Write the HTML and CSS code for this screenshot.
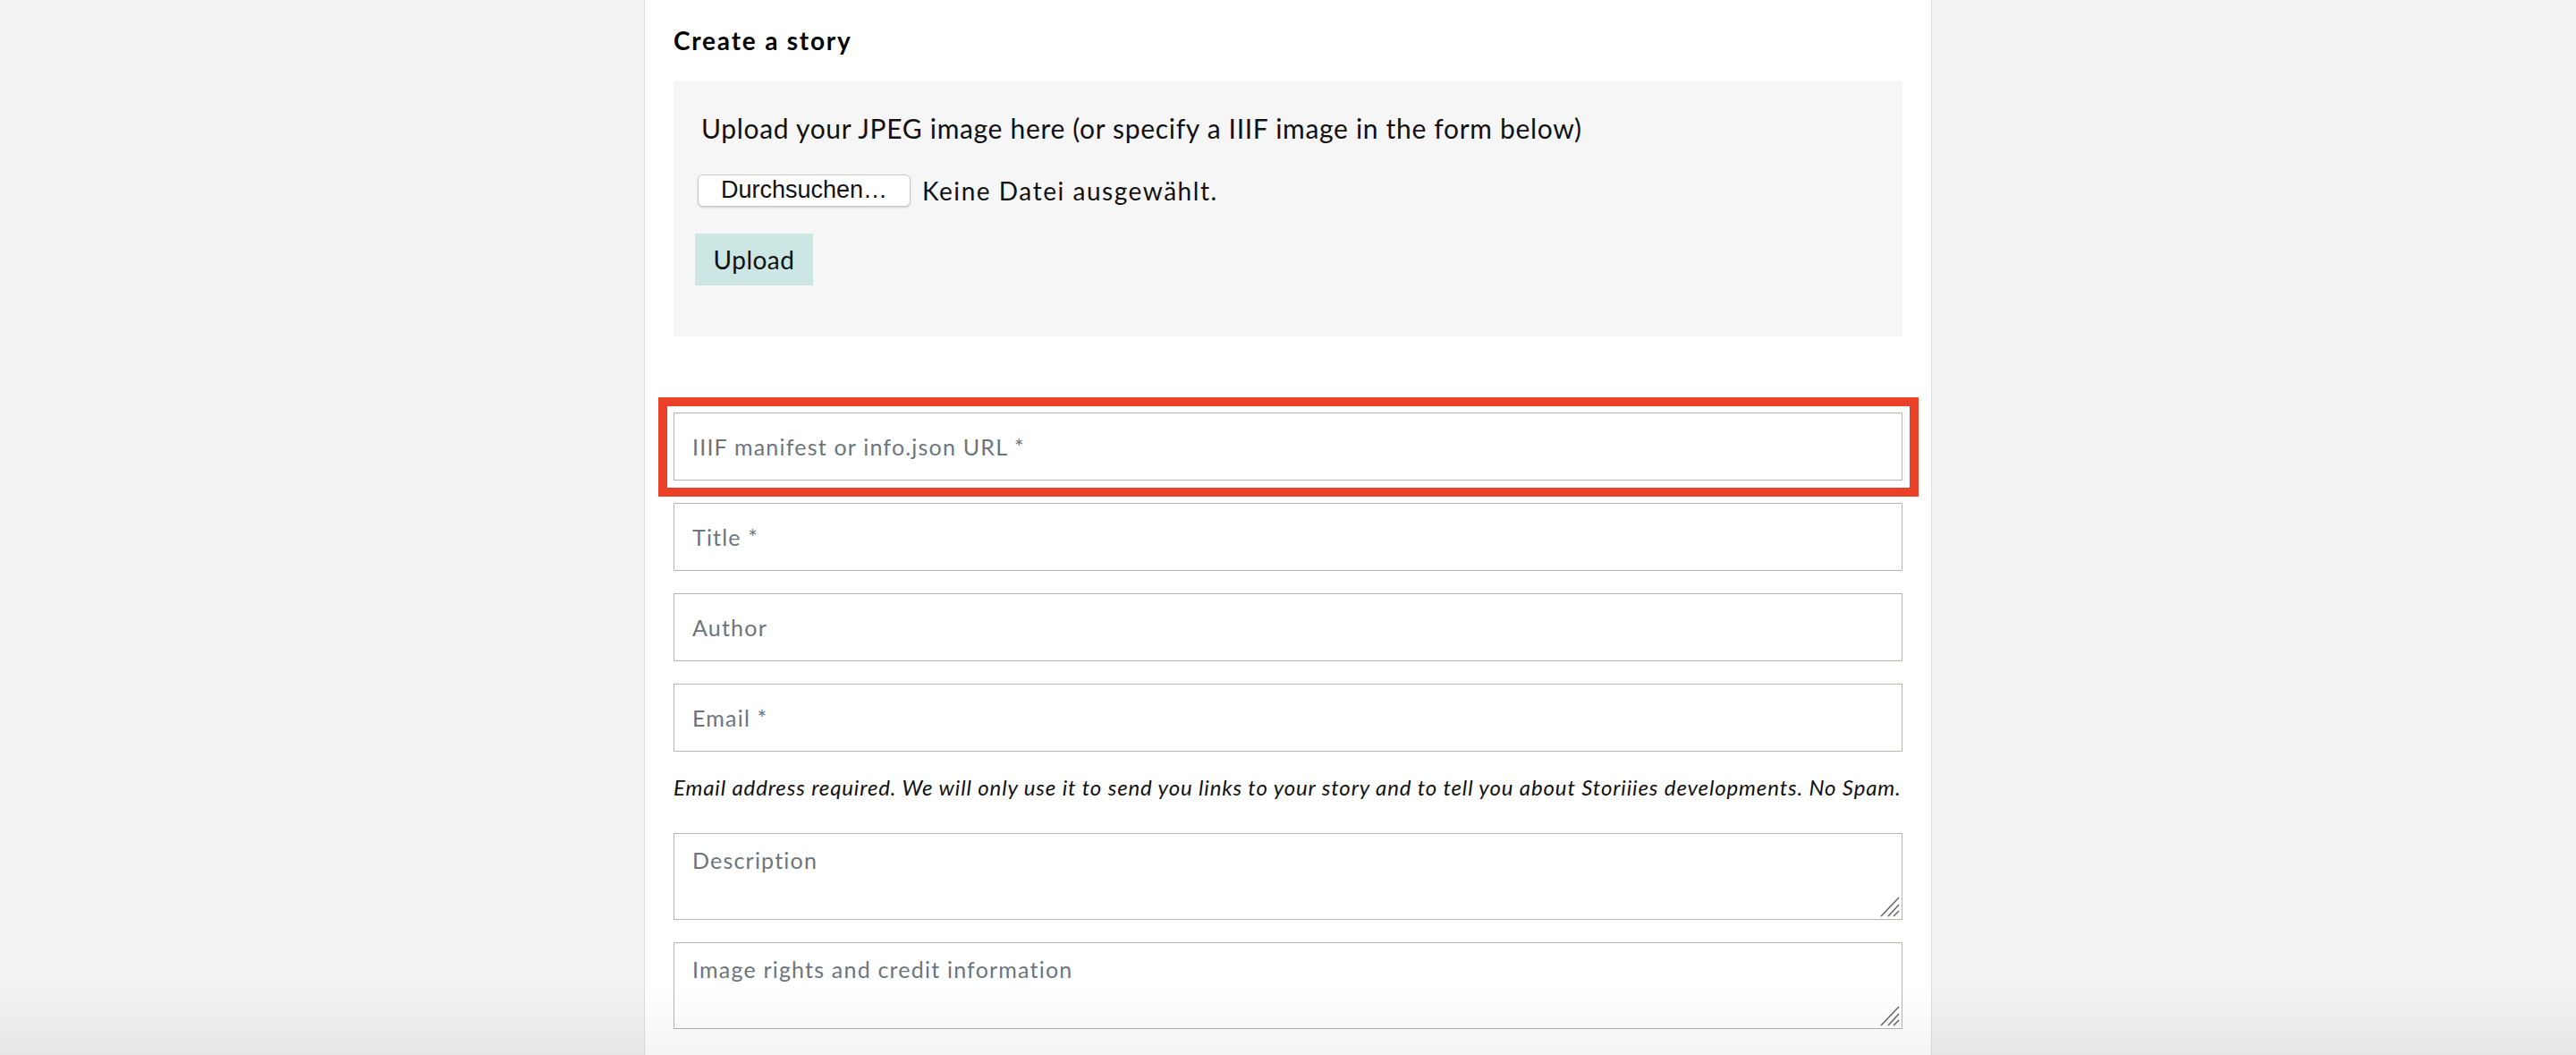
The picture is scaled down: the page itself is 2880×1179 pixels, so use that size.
FILE: index.html
```html
<!DOCTYPE html>
<html lang="en">
<head>
<meta charset="utf-8">
<title>Create a story</title>
<link rel="stylesheet" href="styles.css">
</head>
<body>
<main class="panel">
  <h2 class="title">Create a story</h2>
  <section class="upload-box">
    <p class="upload-hint">Upload your JPEG image here (or specify a IIIF image in the form below)</p>
    <div class="file-row">
      <span class="file-btn">Durchsuchen…</span>
      <span class="file-name">Keine Datei ausgewählt.</span>
    </div>
    <button class="upload-btn" type="button">Upload</button>
  </section>
  <form class="story-form">
    <div class="highlight">
      <input class="field" type="text" placeholder="IIIF manifest or info.json URL *">
    </div>
    <input class="field" type="text" placeholder="Title *">
    <input class="field" type="text" placeholder="Author">
    <input class="field" type="text" placeholder="Email *">
    <p class="note">Email address required. We will only use it to send you links to your story and to tell you about Storiiies developments. No Spam.</p>
    <div class="area-wrap">
      <textarea class="area" placeholder="Description"></textarea>
      <svg class="grip" width="26" height="26" viewBox="0 0 26 26"><path d="M25 4 L5 25 M25 12 L13 25 M25 19 L19 25" stroke="#6a6a6a" stroke-width="1.6" fill="none"/></svg>
    </div>
    <div class="area-wrap">
      <textarea class="area" placeholder="Image rights and credit information"></textarea>
      <svg class="grip" width="26" height="26" viewBox="0 0 26 26"><path d="M25 4 L5 25 M25 12 L13 25 M25 19 L19 25" stroke="#6a6a6a" stroke-width="1.6" fill="none"/></svg>
    </div>
  </form>
</main>
<div class="bottom-shade"></div>
</body>
</html>
```

FILE: styles.css
```css
* { box-sizing: border-box; }

html, body {
  margin: 0;
  padding: 0;
  background: #f2f2f2;
  font-family: Lato, "Open Sans", sans-serif;
  color: #111;
}

.panel {
  width: 1440px;
  min-height: 1179px;
  margin: 0 auto;
  background: #fff;
  border-left: 1px solid #dedede;
  border-right: 1px solid #dedede;
  padding: 29px 32px 40px;
}

.title {
  margin: 0 0 28px;
  font-size: 28px;
  line-height: 1.2;
  font-weight: 700;
  letter-spacing: 1.8px;
  color: #000;
}

.upload-box {
  background: #f6f6f6;
  padding: 34px 31px 57px;
}

.upload-hint {
  margin: 0;
  font-size: 30px;
  line-height: 36px;
  letter-spacing: 0.68px;
  color: #111;
}

.file-row {
  display: flex;
  align-items: center;
  gap: 13px;
  margin-top: 34px;
  margin-left: -4px;
}

.file-btn {
  display: inline-flex;
  align-items: center;
  justify-content: center;
  width: 238px;
  height: 36px;
  background: #fff;
  border: 1px solid #c8c8c8;
  border-radius: 6px;
  box-shadow: 0 1px 2px rgba(0,0,0,0.18);
  font-family: "Liberation Sans", Arial, sans-serif;
  font-size: 27px;
  color: #111;
}

.file-name {
  font-size: 28px;
  letter-spacing: 1.55px;
  color: #111;
}

.upload-btn {
  display: block;
  margin: 30px 0 0 -7px;
  width: 132px;
  height: 58px;
  border: 0;
  padding: 0;
  background: #cce6e4;
  font-family: Lato, sans-serif;
  font-size: 28px;
  letter-spacing: 0.5px;
  color: #111;
}

.story-form {
  margin-top: 85px;
  display: flex;
  flex-direction: column;
}

.highlight {
  position: relative;
  margin-bottom: 25px;
}

.highlight::after {
  content: "";
  position: absolute;
  top: -17px;
  left: -17px;
  right: -18px;
  bottom: -18px;
  border: 10px solid #ea4128;
  pointer-events: none;
}

.field {
  display: block;
  width: 100%;
  height: 76px;
  margin: 0 0 25px;
  padding: 0 20px;
  border: 1px solid #b6b6b1;
  border-radius: 0;
  background: #fff;
  font-family: Lato, sans-serif;
  font-size: 25px;
  letter-spacing: 1.2px;
  color: #111;
  outline: none;
}

.highlight .field { margin-bottom: 0; }

.field::placeholder,
.area::placeholder {
  color: #6c757d;
  opacity: 1;
}

.note {
  margin: 0 0 36px;
  font-size: 24px;
  line-height: 30px;
  font-style: italic;
  letter-spacing: 0.87px;
  color: #111;
  white-space: nowrap;
}

.area-wrap {
  position: relative;
  margin-bottom: 25px;
}

.area {
  display: block;
  width: 100%;
  height: 97px;
  padding: 14px 20px;
  border: 1px solid #b6b6b1;
  border-radius: 0;
  resize: none;
  background: #fff;
  font-family: Lato, sans-serif;
  font-size: 25px;
  letter-spacing: 1.2px;
  line-height: 1.2;
  outline: none;
}

.grip {
  position: absolute;
  right: 3px;
  bottom: 3px;
}

.bottom-shade {
  position: fixed;
  left: 0;
  right: 0;
  bottom: 0;
  height: 80px;
  background: linear-gradient(to bottom, rgba(0,0,0,0), rgba(0,0,0,0.045));
  pointer-events: none;
}
```
